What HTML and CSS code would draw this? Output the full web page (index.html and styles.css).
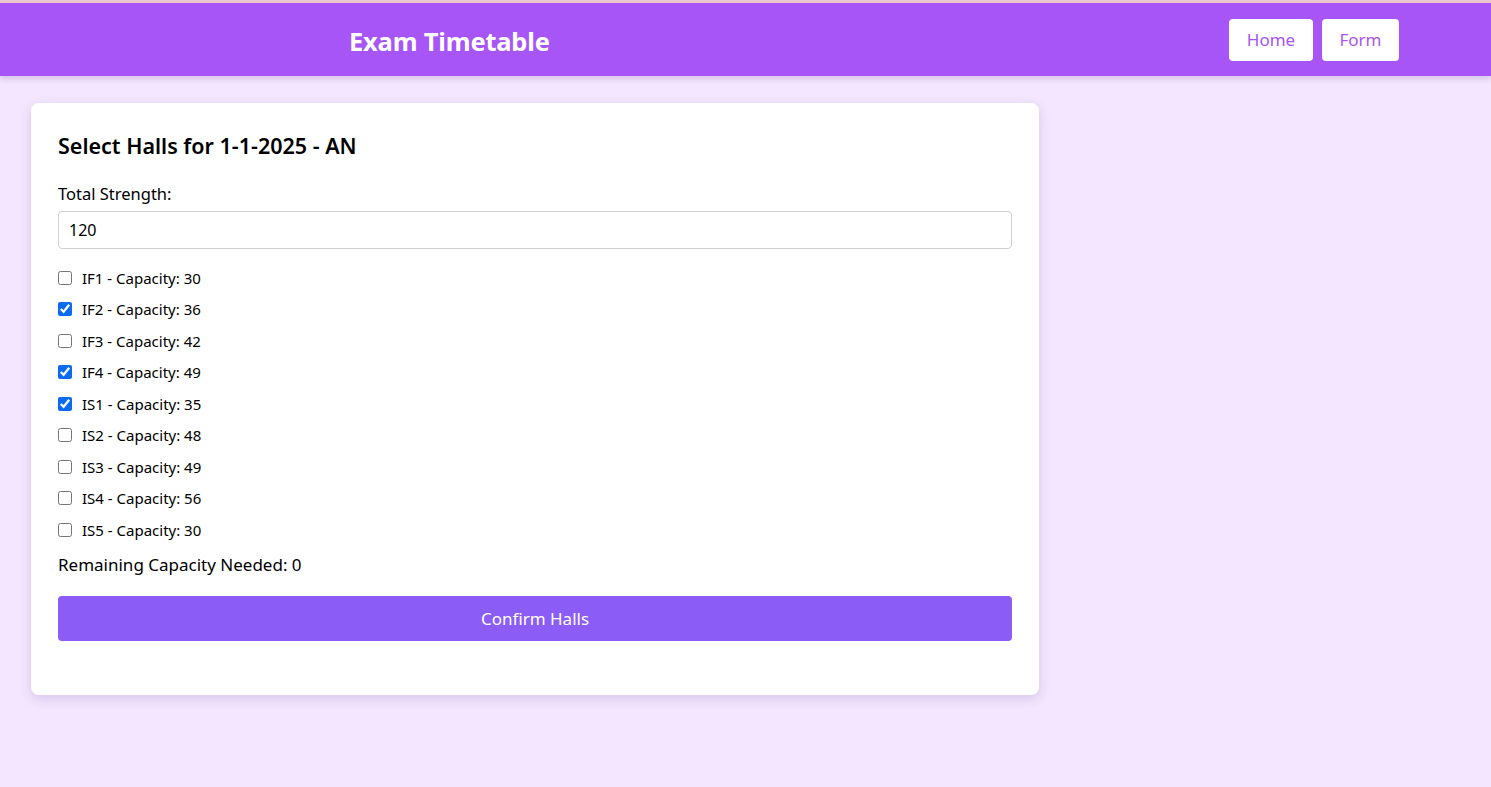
FILE: index.html
```html
<!DOCTYPE html>
<html>
<head>
<meta charset="utf-8">
<title>Exam Timetable</title>
<link rel="stylesheet" href="styles.css">
</head>
<body>
<header class="topbar">
  <h1 class="brand">Exam Timetable</h1>
  <nav class="nav">
    <a class="nav-btn" href="#">Home</a>
    <a class="nav-btn" href="#">Form</a>
  </nav>
</header>
<main class="page">
  <section class="card">
    <h2 class="card-title">Select Halls for 1-1-2025 - AN</h2>
    <label class="field-label">Total Strength:</label>
    <input class="field-input" type="text" value="120">
    <ul class="halls">
      <li class="hall"><input type="checkbox"><span>IF1 - Capacity: 30</span></li>
      <li class="hall"><input type="checkbox" checked><span>IF2 - Capacity: 36</span></li>
      <li class="hall"><input type="checkbox"><span>IF3 - Capacity: 42</span></li>
      <li class="hall"><input type="checkbox" checked><span>IF4 - Capacity: 49</span></li>
      <li class="hall"><input type="checkbox" checked><span>IS1 - Capacity: 35</span></li>
      <li class="hall"><input type="checkbox"><span>IS2 - Capacity: 48</span></li>
      <li class="hall"><input type="checkbox"><span>IS3 - Capacity: 49</span></li>
      <li class="hall"><input type="checkbox"><span>IS4 - Capacity: 56</span></li>
      <li class="hall"><input type="checkbox"><span>IS5 - Capacity: 30</span></li>
    </ul>
    <p class="remaining">Remaining Capacity Needed: 0</p>
    <button class="confirm">Confirm Halls</button>
  </section>
</main>
</body>
</html>
```
FILE: styles.css
```css
* { box-sizing: border-box; }
html, body { margin: 0; padding: 0; }
body {
  background: #f4e6fe;
  font-family: "Noto Sans", "Open Sans", sans-serif;
  color: #000;
  min-height: 787px;
}
.topbar {
  border-top: 3px solid #e9c6d0;
  background: #a855f7;
  height: 76px;
  display: flex;
  align-items: center;
  padding: 0 92px 0 349px;
  box-shadow: 0 3px 6px rgba(80, 40, 120, 0.18);
}
.brand {
  margin: 0;
  padding-top: 2px;
  flex: 1;
  color: #fff;
  font-size: 25.5px;
  font-weight: 700;
  letter-spacing: -0.2px;
}
.nav { display: flex; gap: 9px; }
.nav-btn {
  display: flex;
  align-items: center;
  justify-content: center;
  height: 42px;
  background: #fff;
  color: #a855f7;
  text-decoration: none;
  font-size: 17px;
  border-radius: 4px;
  padding: 0 17px;
}
.nav-btn:first-child { width: 84px; }
.nav-btn:last-child { width: 77px; }
.page { padding: 27px 31px; }
.card {
  width: 1008px;
  background: #fff;
  border-radius: 8px;
  padding: 27px 27px 54px;
  box-shadow: 0 4px 12px rgba(90, 50, 140, 0.18);
}
.card-title {
  margin: 2px 0 0;
  font-size: 21.5px;
  font-weight: 600;
  line-height: 27px;
}
.field-label {
  display: block;
  margin-top: 24px;
  font-size: 16.5px;
  line-height: 22px;
}
.field-input {
  display: block;
  width: 100%;
  height: 38px;
  margin-top: 6px;
  border: 1px solid #d0d0d5;
  border-radius: 4px;
  padding: 0 10px;
  font-family: inherit;
  font-size: 16px;
  color: #000;
}
.halls {
  list-style: none;
  margin: 18px 0 0;
  padding: 0;
  display: flex;
  flex-direction: column;
  gap: 10.5px;
}
.hall {
  display: flex;
  align-items: center;
  height: 21px;
  font-size: 15px;
}
.hall input {
  margin: 0 10px 0 0;
  width: 14px;
  height: 14px;
  accent-color: #0b6bf0;
}
.remaining {
  margin: 14px 0 0;
  font-size: 17px;
  line-height: 22px;
}
.confirm {
  display: block;
  width: 100%;
  height: 45px;
  margin-top: 20px;
  border: none;
  border-radius: 4px;
  background: #8b5cf6;
  color: #fff;
  font-family: inherit;
  font-size: 17px;
}
```
